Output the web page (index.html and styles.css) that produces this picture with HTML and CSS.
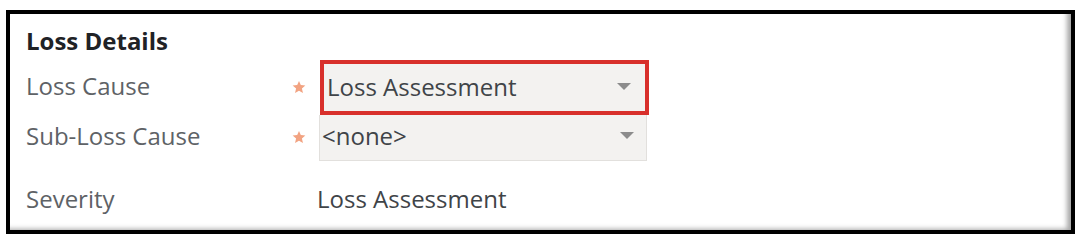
FILE: index.html
```html
<!DOCTYPE html>
<html>
<head>
<meta charset="utf-8">
<link rel="stylesheet" href="styles.css">
</head>
<body>
<div class="frame">
  <div class="panel">
    <div class="heading">Loss Details</div>
    <div class="form">
      <div class="label">Loss Cause</div>
      <div class="req"><svg width="14" height="14" viewBox="0 0 24 24"><path d="M12 1.5l3.1 7.2 7.8.7-5.9 5.2 1.8 7.7L12 18.3l-6.8 4 1.8-7.7-5.9-5.2 7.8-.7z" fill="#f2a382"/></svg></div>
      <div class="select select-hl"><span>Loss Assessment</span><span class="caret"></span></div>

      <div class="label">Sub-Loss Cause</div>
      <div class="req"><svg width="14" height="14" viewBox="0 0 24 24"><path d="M12 1.5l3.1 7.2 7.8.7-5.9 5.2 1.8 7.7L12 18.3l-6.8 4 1.8-7.7-5.9-5.2 7.8-.7z" fill="#f2a382"/></svg></div>
      <div class="select select-plain"><span>&lt;none&gt;</span><span class="caret"></span></div>

      <div class="label sev">Severity</div>
      <div class="req sev"></div>
      <div class="value sev">Loss Assessment</div>
    </div>
  </div>
</div>
</body>
</html>
```

FILE: styles.css
```css
html, body {
  margin: 0;
  padding: 0;
  background: #ffffff;
}
body {
  font-family: "Open Sans", "Liberation Sans", sans-serif;
}
.frame {
  margin: 10px 0 0 6px;
  width: 1069px;
  height: 224px;
  box-sizing: border-box;
  border: 4px solid #000;
  background: #fff;
}
.panel {
  height: 100%;
  box-sizing: border-box;
  padding: 13px 0 0 16px;
  box-shadow: inset -6px -3px 5px -2px rgba(0,0,0,0.35);
}
.heading {
  font-size: 24px;
  line-height: 28px;
  font-weight: 700;
  color: #1f2226;
}
.form {
  margin-top: 5px;
  display: grid;
  grid-template-columns: 266px 27px 330px;
  grid-template-rows: 55px 46px 52px;
  align-items: center;
}
.label {
  font-size: 24px;
  line-height: 28px;
  color: #5e6266;
  padding-bottom: 4px;
}
.req {
  display: flex;
  align-items: center;
  padding-bottom: 2px;
}
.select {
  box-sizing: border-box;
  height: 100%;
  background: #f3f2f0;
  display: flex;
  align-items: center;
  justify-content: space-between;
  font-size: 24px;
  line-height: 28px;
  color: #3f4448;
}
.select-hl {
  border: 4px solid #d8302b;
  margin-left: 1px;
  width: 329px;
  padding: 0 14px 2px 3px;
}
.select-plain {
  border: 1px solid #e2e0dd;
  border-top: none;
  width: 328px;
  padding: 0 12px 4px 2px;
}
.caret {
  width: 0;
  height: 0;
  border-left: 7px solid transparent;
  border-right: 7px solid transparent;
  border-top: 7px solid #8c8c8c;
}
.value {
  font-size: 24px;
  line-height: 28px;
  color: #3f4448;
  margin-left: -2px;
}
.sev {
  align-self: end;
  padding-bottom: 0;
}
.label.sev {
  padding-bottom: 0;
}
```
